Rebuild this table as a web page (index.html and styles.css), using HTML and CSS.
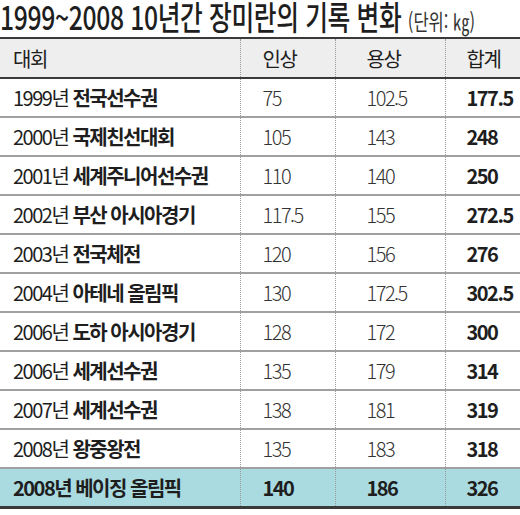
FILE: index.html
```html
<!DOCTYPE html>
<html lang="ko">
<head>
    <meta charset="UTF-8">
    <meta name="viewport" content="width=device-width, initial-scale=1.0">
    <title>장미란의 기록 변화</title>
    <link rel="stylesheet" href="styles.css">
</head>
<body>
    <div class="chart">
        <h1 class="title">1999~2008 10년간 장미란의 기록 변화 <span class="unit">(단위: ㎏)</span></h1>
        <table class="records">
            <thead>
                <tr>
                    <th class="event">대회</th>
                    <th class="snatch">인상</th>
                    <th class="jerk">용상</th>
                    <th class="total">합계</th>
                </tr>
            </thead>
            <tbody>
                <tr>
                    <td class="event">1999년 <b>전국선수권</b></td>
                    <td class="snatch">75</td>
                    <td class="jerk">102.5</td>
                    <td class="total">177.5</td>
                </tr>
                <tr>
                    <td class="event">2000년 <b>국제친선대회</b></td>
                    <td class="snatch">105</td>
                    <td class="jerk">143</td>
                    <td class="total">248</td>
                </tr>
                <tr>
                    <td class="event">2001년 <b>세계주니어선수권</b></td>
                    <td class="snatch">110</td>
                    <td class="jerk">140</td>
                    <td class="total">250</td>
                </tr>
                <tr>
                    <td class="event">2002년 <b>부산 아시아경기</b></td>
                    <td class="snatch">117.5</td>
                    <td class="jerk">155</td>
                    <td class="total">272.5</td>
                </tr>
                <tr>
                    <td class="event">2003년 <b>전국체전</b></td>
                    <td class="snatch">120</td>
                    <td class="jerk">156</td>
                    <td class="total">276</td>
                </tr>
                <tr>
                    <td class="event">2004년 <b>아테네 올림픽</b></td>
                    <td class="snatch">130</td>
                    <td class="jerk">172.5</td>
                    <td class="total">302.5</td>
                </tr>
                <tr>
                    <td class="event">2006년 <b>도하 아시아경기</b></td>
                    <td class="snatch">128</td>
                    <td class="jerk">172</td>
                    <td class="total">300</td>
                </tr>
                <tr>
                    <td class="event">2006년 <b>세계선수권</b></td>
                    <td class="snatch">135</td>
                    <td class="jerk">179</td>
                    <td class="total">314</td>
                </tr>
                <tr>
                    <td class="event">2007년 <b>세계선수권</b></td>
                    <td class="snatch">138</td>
                    <td class="jerk">181</td>
                    <td class="total">319</td>
                </tr>
                <tr>
                    <td class="event">2008년 <b>왕중왕전</b></td>
                    <td class="snatch">135</td>
                    <td class="jerk">183</td>
                    <td class="total">318</td>
                </tr>
                <tr class="highlight">
                    <td class="event">2008년 베이징 올림픽</td>
                    <td class="snatch">140</td>
                    <td class="jerk">186</td>
                    <td class="total">326</td>
                </tr>
            </tbody>
        </table>
    </div>
</body>
</html>
```

FILE: styles.css
```css
:root {
    --ink: #1e1e1e;
    --rule: #3a3a3a;
    --line: #a0a0a0;
    --dots: #9a9a9a;
    --head: #eeeeee;
    --mark: #aadbe1;
}

* {
    margin: 0;
    padding: 0;
    box-sizing: border-box;
}

body {
    background: #ffffff;
    color: var(--ink);
    font-family: 'Noto Sans CJK KR', 'Noto Sans', sans-serif;
}

.chart {
    width: 520px;
}

/* condensed headline, like the newspaper face */
.title {
    width: 693px;
    height: 37px;
    font-size: 33px;
    font-weight: 500;
    line-height: 32px;
    letter-spacing: -0.5px;
    white-space: nowrap;
    transform: scaleX(0.75);
    transform-origin: 0 0;
}

.unit {
    font-size: 22px;
    font-weight: 400;
    letter-spacing: 0;
    color: #333;
}

.records {
    width: 520px;
    border-collapse: collapse;
    table-layout: fixed;
    border-top: 2px solid var(--rule);
    border-bottom: 3px solid var(--rule);
}

.records th,
.records td {
    height: 39px;
    text-align: left;
    font-size: 20px;
    letter-spacing: -1.5px;
    white-space: nowrap;
    border-left: 1px dotted var(--dots);
}

.records th {
    height: 40px;
    background: var(--head);
    font-weight: 400;
    border-bottom: 2px solid var(--rule);
}

.records td {
    border-bottom: 2px solid var(--line);
    font-weight: 400;
}

.records .event {
    width: 240px;
    padding-left: 13px;
    border-left: none;
}

.records .snatch {
    width: 95px;
    padding-left: 22px;
}

.records .jerk {
    width: 110px;
    padding-left: 31px;
}

.records .total {
    width: 75px;
    padding-left: 21px;
}

.records td.snatch,
.records td.jerk {
    color: #333;
    font-weight: 300;
}

.records td.total {
    font-weight: 700;
}

.records b {
    font-weight: 700;
}

.records .highlight td {
    background: var(--mark);
    font-weight: 700;
    color: var(--ink);
    border-bottom: none;
}
```
